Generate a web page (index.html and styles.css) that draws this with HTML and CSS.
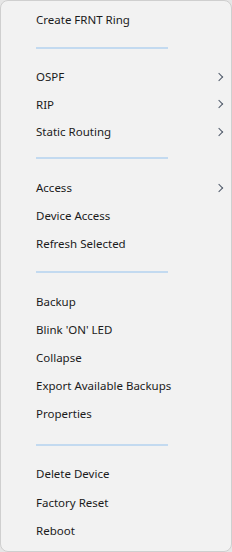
FILE: index.html
```html
<!doctype html>
<html lang="en">
<head>
	<meta charset="UTF-8">
	<title>Device menu</title>
	<link rel="stylesheet" href="styles.css">
</head>
<body>

	<div class="menu">
		<div class="item">Create FRNT Ring</div>
		<div class="sep sep-1"></div>

		<div class="item sub tight">OSPF</div>
		<div class="item sub tight">RIP</div>
		<div class="item sub tight">Static Routing</div>
		<div class="sep sep-2"></div>

		<div class="item sub">Access</div>
		<div class="item">Device Access</div>
		<div class="item">Refresh Selected</div>
		<div class="sep sep-3"></div>

		<div class="item">Backup</div>
		<div class="item">Blink 'ON' LED</div>
		<div class="item">Collapse</div>
		<div class="item">Export Available Backups</div>
		<div class="item">Properties</div>
		<div class="sep sep-4"></div>

		<div class="item loose">Delete Device</div>
		<div class="item loose">Factory Reset</div>
		<div class="item loose">Reboot</div>
	</div>

</body>
</html>
```

FILE: styles.css
```css
* {margin: 0; padding: 0; box-sizing: border-box;}
html, body {width: 232px; height: 552px; background: #e6e6e6;}
body {font: normal 11.5px/1 "Noto Sans", "Liberation Sans", sans-serif; color: #1b1b1b;}

.menu {width: 232px; height: 552px; background: #f2f2f2; border: 1px solid #cfcfcf; border-radius: 8px; padding-top: 5px; display: flex; flex-direction: column;}
.menu .item {height: 28px; flex: none; display: flex; align-items: center; padding-left: 35px; position: relative;}
.menu .tight {height: 27.5px;}
.menu .loose {height: 28.6px;}
.menu .sub::after {content: ""; position: absolute; right: 9px; top: 50%; width: 5px; height: 5px; margin-top: -3px; border-top: 1px solid #505a6a; border-right: 1px solid #505a6a; transform: rotate(45deg);}

/* separadores */
.menu .sep {flex: none; padding-left: 35px;}
.menu .sep::before {content: ""; display: block; width: 132px; height: 2px; background: #c3daf0;}
.menu .sep-1 {height: 29px; padding-top: 13px;}
.menu .sep-2 {height: 28px; padding-top: 11px;}
.menu .sep-3 {height: 30px; padding-top: 13px;}
.menu .sep-4 {height: 32px; padding-top: 16px;}
```
